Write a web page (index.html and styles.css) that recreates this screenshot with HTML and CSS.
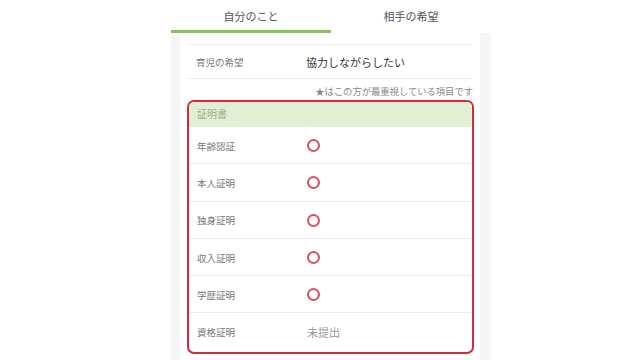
FILE: index.html
```html
<!DOCTYPE html>
<html lang="ja">
<head>
<meta charset="utf-8">
<link rel="stylesheet" href="styles.css">
</head>
<body>
<div class="page">
  <div class="tabs">
    <div class="tab active">自分のこと</div>
    <div class="tab">相手の希望</div>
  </div>
  <div class="content">
    <div class="card">
      <div class="prev"></div>
      <div class="row top-row">
        <div class="label">育児の希望</div>
        <div class="value strong">協力しながらしたい</div>
      </div>
      <div class="note">★はこの方が最重視している項目です</div>
      <div class="cert">
        <div class="cert-head">証明書</div>
        <div class="row cert-row"><div class="label">年齢認証</div><div class="value"><span class="circle"></span></div></div>
        <div class="row cert-row"><div class="label">本人証明</div><div class="value"><span class="circle"></span></div></div>
        <div class="row cert-row"><div class="label">独身証明</div><div class="value"><span class="circle"></span></div></div>
        <div class="row cert-row"><div class="label">収入証明</div><div class="value"><span class="circle"></span></div></div>
        <div class="row cert-row"><div class="label">学歴証明</div><div class="value"><span class="circle"></span></div></div>
        <div class="row cert-row last"><div class="label">資格証明</div><div class="value muted">未提出</div></div>
      </div>
    </div>
  </div>
</div>
</body>
</html>
```
FILE: styles.css
```css
html, body {
  margin: 0;
  padding: 0;
  background: #ffffff;
  font-family: "Noto Sans CJK JP", "Noto Sans", sans-serif;
  overflow: hidden;
}
.page {
  width: 320px;
  margin-left: 171px;
}
.tabs {
  display: flex;
  height: 33px;
}
.tab {
  width: 160px;
  box-sizing: border-box;
  height: 33px;
  padding-top: 8px;
  text-align: center;
  font-size: 11px;
  line-height: 16px;
  color: #555;
}
.tab.active {
  border-bottom: 3px solid #86c35a;
}
.content {
  background: #f5f5f5;
  padding: 0 11px 0 9px;
  height: 330px;
}
.card {
  background: #ffffff;
  padding: 0 6px 0 7px;
  height: 100%;
}
.prev {
  height: 11px;
  border-bottom: 1px solid #eeeeee;
  margin: 0 1px;
}
.row {
  display: flex;
  align-items: center;
}
.top-row {
  height: 33px;
  border-bottom: 1px solid #eeeeee;
  margin: 0 1px;
  padding-left: 8px;
}
.label {
  width: 110px;
  font-size: 9.5px;
  color: #777;
  flex-shrink: 0;
}
.value {
  font-size: 11px;
  color: #333;
}
.value.muted {
  color: #999;
}
.note {
  text-align: right;
  font-size: 9.3px;
  line-height: 13px;
  color: #888;
  padding-top: 6px;
  height: 15px;
  padding-right: 1px;
}
.cert {
  border: 2px solid #d12b3c;
  border-radius: 7px;
  overflow: hidden;
}
.cert-head {
  background: #e3efd3;
  height: 25px;
  line-height: 24px;
  padding-left: 8px;
  font-size: 10px;
  color: #9aae8a;
}
.cert-row {
  height: 35.3px;
  border-bottom: 1px solid #eeeeee;
  padding-left: 8px;
  padding-top: 1px;
}
.cert-row.last {
  border-bottom: none;
  padding-bottom: 2px;
}
.circle {
  display: block;
  width: 9px;
  height: 9px;
  border: 2px solid #d94f66;
  border-radius: 50%;
}
```
